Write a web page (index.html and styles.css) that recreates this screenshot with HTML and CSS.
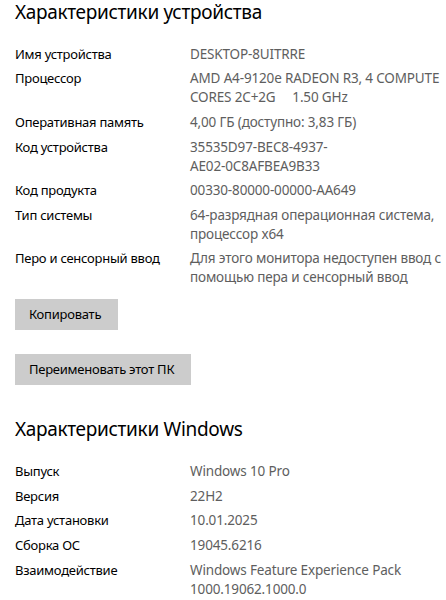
FILE: index.html
```html
<!DOCTYPE html>
<html lang="ru">
<head>
<meta charset="utf-8">
<title>Характеристики</title>
<link rel="stylesheet" href="styles.css">
</head>
<body>
<main class="page">
  <section class="section">
    <h1 class="title">Характеристики устройства</h1>
    <dl class="specs">
      <dt>Имя устройства</dt><dd>DESKTOP-8UITRRE</dd>
      <dt>Процессор</dt><dd>AMD A4-9120e RADEON R3, 4 COMPUTE<br>CORES 2C+2G&nbsp;&nbsp;&nbsp;&nbsp; 1.50 GHz</dd>
      <dt>Оперативная память</dt><dd>4,00 ГБ (доступно: 3,83 ГБ)</dd>
      <dt>Код устройства</dt><dd>35535D97-BEC8-4937-<br>AE02-0C8AFBEA9B33</dd>
      <dt>Код продукта</dt><dd>00330-80000-00000-AA649</dd>
      <dt>Тип системы</dt><dd>64-разрядная операционная система,<br>процессор x64</dd>
      <dt>Перо и сенсорный ввод</dt><dd>Для этого монитора недоступен ввод с<br>помощью пера и сенсорный ввод</dd>
    </dl>
    <div class="actions">
      <button class="btn" type="button">Копировать</button>
      <button class="btn" type="button">Переименовать этот ПК</button>
    </div>
  </section>
  <section class="section section-win">
    <h1 class="title">Характеристики Windows</h1>
    <dl class="specs">
      <dt>Выпуск</dt><dd>Windows 10 Pro</dd>
      <dt>Версия</dt><dd>22H2</dd>
      <dt>Дата установки</dt><dd>10.01.2025</dd>
      <dt>Сборка ОС</dt><dd>19045.6216</dd>
      <dt>Взаимодействие</dt><dd>Windows Feature Experience Pack<br>1000.19062.1000.0</dd>
    </dl>
  </section>
</main>
</body>
</html>
```

FILE: styles.css
```css
html, body {
  margin: 0;
  padding: 0;
  background: #ffffff;
}

body {
  font-family: "Noto Sans", "Open Sans", sans-serif;
  color: #000000;
}

.page {
  padding: 0 15px;
}

.title {
  margin: 0 0 20.8px 0;
  font-size: 19px;
  font-weight: 400;
  line-height: 24px;
  letter-spacing: -0.3px;
  color: #000000;
}

.section-win {
  margin-top: 32px;
}

.specs {
  display: grid;
  grid-template-columns: 175px 1fr;
  row-gap: 5.6px;
  margin: 0;
  font-size: 13.5px;
  line-height: 19px;
}

.specs dt {
  margin: 0;
  color: #000000;
  font-size: 13px;
  letter-spacing: -0.25px;
  white-space: nowrap;
}

.specs dd {
  margin: 0;
  color: #5e5e5e;
  letter-spacing: -0.15px;
  white-space: nowrap;
}

.actions {
  display: flex;
  flex-direction: column;
  align-items: flex-start;
  gap: 24px;
  margin-top: 12px;
}

.btn {
  height: 31px;
  padding: 0 17px 0 14px;
  border: none;
  border-radius: 0;
  background: #cccccc;
  color: #000000;
  font-family: "Noto Sans", "Open Sans", sans-serif;
  font-size: 13px;
  letter-spacing: -0.25px;
  line-height: 31px;
}
```
